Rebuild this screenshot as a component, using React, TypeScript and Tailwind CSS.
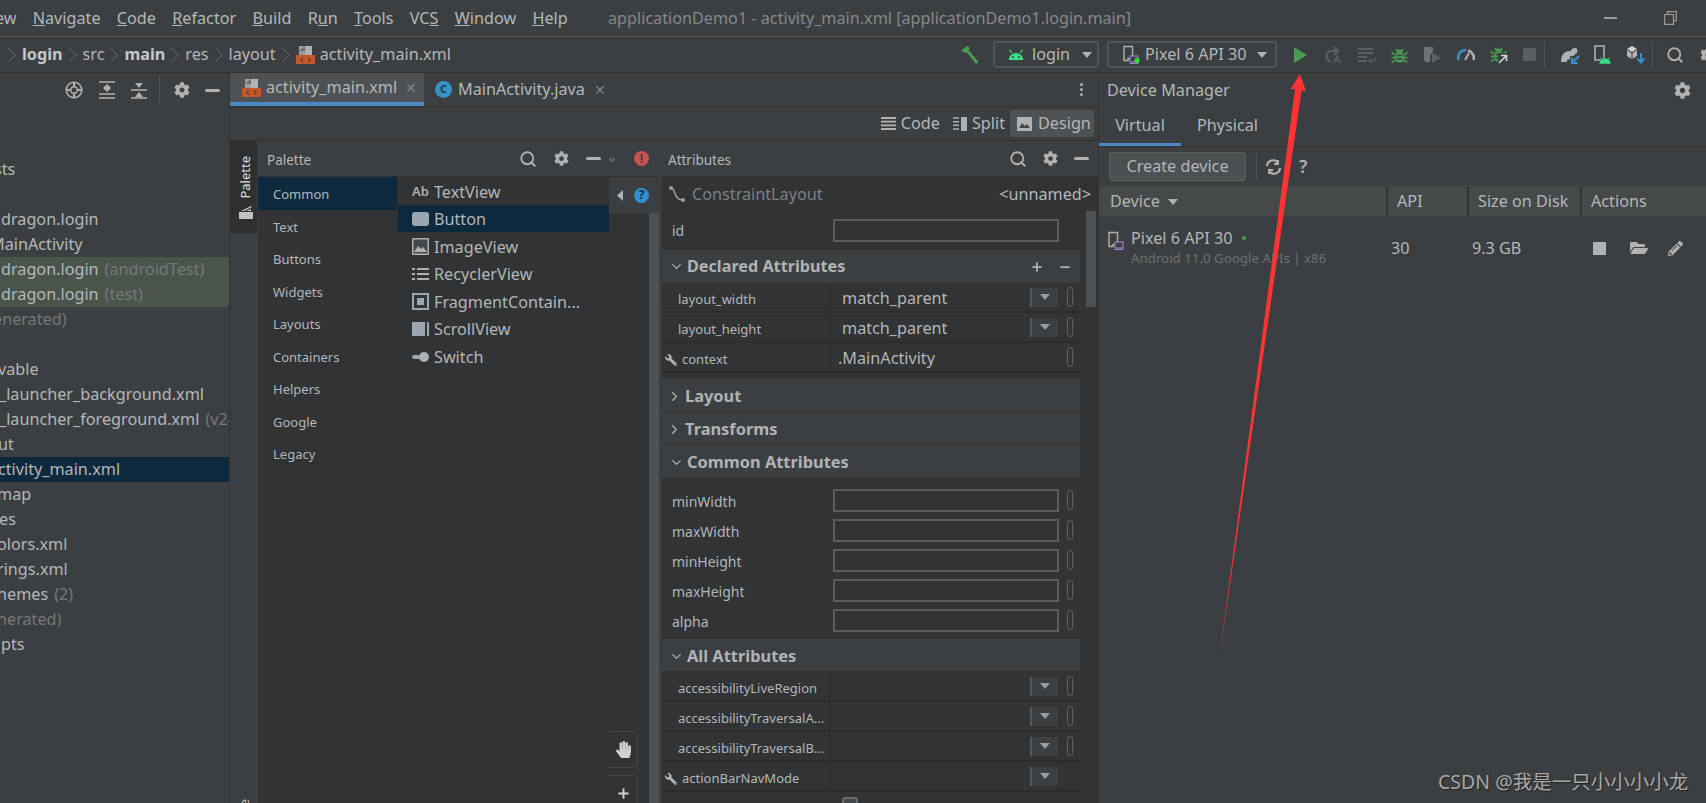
import { ChevronDown, ChevronRight, Minus, Plus, Search } from "lucide-react";
import { FaCog, FaFolderOpen, FaHandPaper, FaPencilAlt, FaWrench } from "react-icons/fa";
import type { ReactNode } from "react";

function XmlIcon() {
  return (
    <svg width="19" height="19" viewBox="0 0 19 19" className="shrink-0">
      <path d="M3 1h9l4 0v9H3z" fill="#9a9c9e" />
      <path d="M9 1h7v9H9z" fill="#afb1b3" />
      <path d="M3 6h6V1z" fill="#3c3f41" opacity="0.5" />
      <rect x="0" y="10" width="19" height="9" fill="#c2582a" />
      <path d="M7 12.5l-2.5 2 2.5 2M12 12.5l2.5 2-2.5 2" stroke="#2b2b2b" strokeWidth="1" fill="none" />
    </svg>
  );
}

function AndroidHead({ size = 16, color = "#3ddc84" }: { size?: number; color?: string }) {
  return (
    <svg width={size} height={size * 0.72} viewBox="0 0 16 11.5">
      <path d="M0.5 11.5a7.5 7.5 0 0 1 15 0z" fill={color} />
      <path d="M3.5 4L1.8 0.8M12.5 4l1.7-3.2" stroke={color} strokeWidth="1.3" />
      <circle cx="5" cy="8" r="0.9" fill="#3c3f41" />
      <circle cx="11" cy="8" r="0.9" fill="#3c3f41" />
    </svg>
  );
}

function PhoneIcon({ dot = false }: { dot?: boolean }) {
  return (
    <svg width="18" height="19" viewBox="0 0 18 19" className="shrink-0">
      <path d="M2 1.5h8.5v12H6v2H2z" fill="none" stroke="#afb1b3" strokeWidth="1.4" />
      <rect x="8" y="11" width="8" height="6" fill="#3c3f41" stroke="#9b7fc9" strokeWidth="1.2" />
      <path d="M7.5 18.5h9" stroke="#9b7fc9" strokeWidth="1" />
      {dot ? <circle cx="15" cy="15.5" r="2.6" fill="#22e02e" /> : null}
    </svg>
  );
}

function BugShape() {
  return (
    <g>
      <path d="M5 3l1.6 2M12 3l-1.6 2" stroke="#499c54" strokeWidth="1.6" />
      <path d="M5 6.5a3.5 3 0 0 1 7 0z" fill="#499c54" />
      <rect x="3.5" y="6.5" width="10" height="10" rx="4.5" fill="#499c54" />
      <path d="M0.5 6.5l3 2M16.5 6.5l-3 2M0.5 11.5h3M16.5 11.5h-3M0.8 16.5l3-2M16.2 16.5l-3-2" stroke="#499c54" strokeWidth="1.7" />
      <path d="M5.5 9.5h6M5.5 13h6" stroke="#3c3f41" strokeWidth="1.4" />
    </g>
  );
}

function Gear({ size = 15 }: { size?: number }) {
  return <FaCog size={size} color="#afb1b3" />;
}

function Dash() {
  return <div className="h-[3px] w-[15px] rounded-sm bg-[#afb1b3]" />;
}

function Slot({ children, w = "w-[33px]" }: { children: ReactNode; w?: string }) {
  return <div className={`flex ${w} shrink-0 items-center justify-center`}>{children}</div>;
}

function ImageGlyph() {
  return (
    <svg width="17" height="17" viewBox="0 0 17 17" className="shrink-0">
      <rect width="17" height="17" rx="1" fill="#afb1b3" />
      <rect x="1.5" y="1.5" width="14" height="14" fill="#45484a" />
      <path d="M2 14l4-6 3 3 2-2 4 5z" fill="#afb1b3" />
    </svg>
  );
}

function Menu() {
  const items: [string, string][] = [
    ["N", "avigate"],
    ["C", "ode"],
    ["R", "efactor"],
    ["B", "uild"],
  ];
  return (
    <div className="flex h-[36px] items-center overflow-hidden text-[16.2px] text-[#b4b7b9]">
      <div className="flex w-[608px] shrink-0 items-center gap-[16.3px]">
        <span className="ml-[-19px]">View</span>
        {items.map(([k, rest]) => (
          <span key={k}>
            <span className="underline">{k}</span>
            {rest}
          </span>
        ))}
        <span>
          R<span className="underline">u</span>n
        </span>
        <span>
          <span className="underline">T</span>ools
        </span>
        <span>
          VC<span className="underline">S</span>
        </span>
        <span>
          <span className="underline">W</span>indow
        </span>
        <span>
          <span className="underline">H</span>elp
        </span>
      </div>
      <span className="whitespace-nowrap text-[#85888a]">applicationDemo1 - activity_main.xml [applicationDemo1.login.main]</span>
      <div className="ml-auto flex items-center">
        <div className="mr-[47px] h-[1.5px] w-[13px] bg-[#9a9c9e]" />
        <svg width="13" height="14" viewBox="0 0 13 14" className="mr-[29px]">
          <path d="M3.5 3V0.7h8.8v9H9.5M0.7 3.5h8.8v9.8H0.7z" fill="none" stroke="#9a9c9e" strokeWidth="1.2" />
        </svg>
      </div>
    </div>
  );
}

function Crumb({ children, bold }: { children: ReactNode; bold?: boolean }) {
  return (
    <>
      <span className={bold ? "font-bold text-[#c4c7c9]" : ""}>{children}</span>
      <ChevronRight size={26} strokeWidth={0.7} className="mx-[-6px] text-[#7a7d7f]" />
    </>
  );
}

function Toolbar() {
  return (
    <div className="flex h-[37px] items-center border-t border-[#555452] border-b border-b-[#323232] text-[16.2px] text-[#b4b7b9]">
      <div className="flex items-center gap-[3px] pl-[5px]">
        <ChevronRight size={26} strokeWidth={0.7} className="mx-[-6px] text-[#7a7d7f]" />
        <Crumb bold>login</Crumb>
        <Crumb>src</Crumb>
        <Crumb bold>main</Crumb>
        <Crumb>res</Crumb>
        <Crumb>layout</Crumb>
        <XmlIcon />
        <span className="ml-[2px]">activity_main.xml</span>
      </div>
      <div className="ml-auto flex items-center">
        <svg width="20" height="20" viewBox="0 0 20 20" className="mr-[13px]">
          <path d="M1 6l6-5 3 2-4 5zM6.5 7l2-2 10 12-2.5 2z" fill="#499c54" />
        </svg>
        <div className="mr-[8px] flex h-[27px] w-[106px] items-center gap-[8px] rounded-[4px] border-2 border-[#50555a] pl-[13px]">
          <AndroidHead />
          <span>login</span>
          <svg width="10" height="6" viewBox="0 0 10 6" className="ml-[4px]"><path d="M0 0h10L5 6z" fill="#afb1b3" /></svg>
        </div>
        <div className="mr-[7px] flex h-[27px] w-[170px] items-center gap-[5px] rounded-[4px] border-2 border-[#50555a] pl-[13px]">
          <PhoneIcon dot />
          <span className="whitespace-nowrap">Pixel 6 API 30</span>
          <svg width="10" height="6" viewBox="0 0 10 6" className="ml-[5px]"><path d="M0 0h10L5 6z" fill="#afb1b3" /></svg>
        </div>
        <Slot>
          <svg width="13" height="16" viewBox="0 0 13 16"><path d="M0 0l13 8-13 8z" fill="#499c54" /></svg>
        </Slot>
        <Slot>
          <svg width="18" height="18" viewBox="0 0 18 18" fill="none" stroke="#5c5f61" strokeWidth="2.2">
            <path d="M11 5H8a5.5 5.5 0 0 0-2 11M9 1l4 4-4 4" />
            <path d="M9 17l3-7 3 7M10 14.5h4" strokeWidth="1.3" />
          </svg>
        </Slot>
        <Slot>
          <svg width="18" height="16" viewBox="0 0 18 16" fill="none" stroke="#5c5f61" strokeWidth="2">
            <path d="M0 2h15M0 6h15M0 10h9M0 14h9" />
            <path d="M17 10v2a2 2 0 0 1-2 2h-3M13.5 12l-2 2 2 2" strokeWidth="1.2" />
          </svg>
        </Slot>
        <Slot>
          <svg width="17" height="18" viewBox="0 0 17 18"><BugShape /></svg>
        </Slot>
        <Slot>
          <svg width="19" height="18" viewBox="0 0 19 18">
            <path d="M1 1h9v4l-3 5v6H4a3 3 0 0 1-3-3z" fill="#6e7072" />
            <path d="M9 7l9 5-9 5z" fill="#5c5f61" />
          </svg>
        </Slot>
        <Slot>
          <svg width="18" height="13" viewBox="0 0 18 13" fill="none">
            <path d="M1.5 12a7.5 7.5 0 0 1 7.5-10" stroke="#3592c4" strokeWidth="2.6" />
            <path d="M11 2.5a7.5 7.5 0 0 1 5.5 9.5" stroke="#afb1b3" strokeWidth="2.6" />
            <path d="M8 12l4-7" stroke="#afb1b3" strokeWidth="2" />
          </svg>
        </Slot>
        <Slot>
          <svg width="18" height="19" viewBox="0 0 18 19">
            <BugShape />
            <rect x="8" y="8" width="10" height="11" fill="#3c3f41" />
            <path d="M9 18l7-7M11 10.5h5.5V16" stroke="#cfd1d3" strokeWidth="1.7" fill="none" />
          </svg>
        </Slot>
        <Slot w="w-[29px]"><div className="h-[13px] w-[13px] bg-[#5c5f61]" /></Slot>
        <div className="mr-[8px] h-[26px] w-px bg-[#515557]" />
        <Slot>
          <svg width="20" height="18" viewBox="0 0 20 18">
            <path d="M1 16c0-7 3-11 9-11h1c0-3 5-4 6-2 1 2 0 5-2 5l-1 2v6h-3l-1-3-3 1v2H3z" fill="#afb1b3" />
            <rect x="10" y="10" width="10" height="8" fill="#3c3f41" />
            <path d="M19 10l-7 7M12 11.5V17h5.5" stroke="#3592c4" strokeWidth="2.2" fill="none" />
          </svg>
        </Slot>
        <Slot>
          <svg width="19" height="20" viewBox="0 0 19 20">
            <path d="M2 1h9v14H2z" fill="none" stroke="#afb1b3" strokeWidth="1.6" />
            <path d="M6 19a6 6 0 0 1 12 0z" fill="#3ddc84" stroke="#3c3f41" strokeWidth="0.5" />
            <path d="M8.5 14.5l-1-2M15.5 14.5l1-2" stroke="#3ddc84" strokeWidth="1" />
          </svg>
        </Slot>
        <Slot>
          <svg width="19" height="19" viewBox="0 0 19 19">
            <path d="M1 4l5-3 5 3-5 3z" fill="#cfd1d3" />
            <path d="M1 5l4.5 3v6L1 11zM11 5L6.5 8v6l4.5-3z" fill="#afb1b3" />
            <path d="M15 8v9M11.5 13.5l3.5 4 3.5-4" stroke="#3592c4" strokeWidth="2" fill="none" />
          </svg>
        </Slot>
        <div className="h-[26px] w-px bg-[#515557]" />
        <Slot w="w-[44px]"><Search size={18} strokeWidth={2.4} color="#afb1b3" /></Slot>
        <Slot w="w-[9px]"><div className="ml-[12px]"><FaCog size={16} color="#afb1b3" /></div></Slot>
      </div>
    </div>
  );
}

const treeRows: { text: string; note?: string; cls: string; bg?: string; dim?: boolean }[] = [
  { text: "sts", cls: "ml-[-6px]" },
  { text: "", cls: "" },
  { text: "dragon.login", cls: "ml-[1px]" },
  { text: "MainActivity", cls: "ml-[-10px]" },
  { text: "dragon.login", note: "(androidTest)", cls: "ml-[1px]", bg: "bg-[#4a544b]" },
  { text: "dragon.login", note: "(test)", cls: "ml-[1px]", bg: "bg-[#4a544b]" },
  { text: "enerated)", cls: "ml-[-7px]", dim: true },
  { text: "", cls: "" },
  { text: "vable", cls: "ml-[-2px]" },
  { text: "_launcher_background.xml", cls: "ml-[-1px]" },
  { text: "_launcher_foreground.xml", note: "(v24)", cls: "ml-[-1px]" },
  { text: "ut", cls: "ml-[-2px]" },
  { text: "ctivity_main.xml", cls: "ml-[-2px]", bg: "bg-[#0d293e]" },
  { text: "map", cls: "ml-[-3px]" },
  { text: "es", cls: "ml-[-1px]" },
  { text: "olors.xml", cls: "ml-[-3px]" },
  { text: "rings.xml", cls: "ml-[-3px]" },
  { text: "hemes", note: "(2)", cls: "ml-[-3px]" },
  { text: "nerated)", cls: "ml-[-3px]", dim: true },
  { text: "pts", cls: "ml-[1px]" },
];

function ProjectPanel() {
  return (
    <div className="flex w-[230px] shrink-0 flex-col overflow-hidden border-r border-[#323232]">
      <div className="relative flex h-[34px] items-center justify-end text-[#afb1b3]">
        <svg width="18" height="18" viewBox="0 0 18 18" fill="none" stroke="#afb1b3" className="absolute left-[65px]">
          <circle cx="9" cy="9" r="7.8" strokeWidth="1.6" />
          <circle cx="9" cy="9" r="3.2" strokeWidth="1.4" />
          <path d="M9 1v4M9 13v4M1 9h4M13 9h4" strokeWidth="2" />
        </svg>
        <svg width="16" height="18" viewBox="0 0 16 18" className="absolute left-[99px]">
          <path d="M0 1h16M0 17h16M0 13h16" stroke="#afb1b3" strokeWidth="1.6" />
          <path d="M8 3l4 4H4zM8 11L4 7h8z" fill="#afb1b3" />
        </svg>
        <svg width="16" height="18" viewBox="0 0 16 18" className="absolute left-[131px]">
          <path d="M0 9h16M0 17h16" stroke="#afb1b3" strokeWidth="1.6" />
          <path d="M8 7L4 2h8zM8 11l4 5H4z" fill="#afb1b3" />
        </svg>
        <div className="absolute left-[159px] h-[26px] w-px bg-[#515557]" />
        <div className="absolute left-[174px]"><Gear size={16} /></div>
        <div className="absolute left-[205px]"><Dash /></div>
      </div>
      <div className="flex-1 pt-[50px] text-[16.2px] text-[#b4b7b9]">
        {treeRows.map((r, i) => (
          <div key={i} className={`flex h-[25px] items-center whitespace-nowrap ${r.bg ?? ""}`}>
            <span className={`${r.cls} ${r.dim ? "text-[#75787a]" : ""}`}>{r.text}</span>
            {r.note ? <span className="ml-[6px] text-[#75787a]">{r.note}</span> : null}
          </div>
        ))}
      </div>
    </div>
  );
}

function Tabs() {
  return (
    <div className="flex h-[34px] items-stretch border-b border-[#323232] text-[16.2px] text-[#b4b7b9]">
      <div className="flex w-[194px] shrink-0 items-center gap-[5px] border-b-4 border-[#4a88c7] bg-[#4e5254] pl-[12px]">
        <XmlIcon />
        <span>activity_main.xml</span>
        <span className="ml-[3px] text-[14px] text-[#7f8284]">✕</span>
      </div>
      <div className="ml-[11px] flex items-center gap-[6px]">
        <div className="flex h-[17px] w-[17px] items-center justify-center rounded-full bg-[#3592c4] text-[11px] font-bold text-[#1f3a4a]">C</div>
        <span>MainActivity.java</span>
        <span className="ml-[3px] text-[14px] text-[#7f8284]">✕</span>
      </div>
      <div className="ml-auto mr-[15px] flex flex-col justify-center gap-[2px]">
        <div className="h-[3px] w-[3px] rounded-full bg-[#afb1b3]" />
        <div className="h-[3px] w-[3px] rounded-full bg-[#afb1b3]" />
        <div className="h-[3px] w-[3px] rounded-full bg-[#afb1b3]" />
      </div>
    </div>
  );
}

function ViewModes() {
  return (
    <div className="flex h-[34px] items-center justify-end border-b border-[#323232] pr-[4px] text-[16.2px] text-[#b4b7b9]">
      <svg width="15" height="14" viewBox="0 0 15 14" className="mr-[5px]">
        <path d="M0 1h15M0 4.7h15M0 8.3h15M0 12h15" stroke="#afb1b3" strokeWidth="1.8" />
      </svg>
      <span className="mr-[13px]">Code</span>
      <svg width="14" height="14" viewBox="0 0 14 14" className="mr-[5px]">
        <path d="M0 1h6M0 4.7h6M0 8.3h6M0 12h6" stroke="#afb1b3" strokeWidth="1.6" />
        <rect x="8" y="0" width="6" height="14" fill="#afb1b3" />
      </svg>
      <span className="mr-[5px]">Split</span>
      <div className="flex h-[27px] w-[84px] items-center gap-[6px] rounded-[3px] bg-[#4e5254] pl-[7px]">
        <svg width="15" height="14" viewBox="0 0 15 14" className="shrink-0">
          <rect width="15" height="14" fill="#afb1b3" />
          <path d="M2 11l3-5 3 3 2-2 3 4z" fill="#45484a" />
        </svg>
        <span>Design</span>
      </div>
    </div>
  );
}

function PaletteStrip() {
  return (
    <div className="flex w-[28px] shrink-0 flex-col border-r border-[#3c3f41] bg-[#3c3f41]">
      <div className="flex h-[92px] flex-col items-center justify-end gap-[6px] bg-[#2d2f30] pb-[14px] pl-[4px]">
        <span className="rotate-180 text-[13px] text-[#e0e0e0] [writing-mode:vertical-rl]">Palette</span>
        <svg width="14" height="14" viewBox="0 0 14 14">
          <path d="M0 7h14v7H0zM2 6l10-5 1 1-8 4zM7 6l5-2v2z" fill="#c0c2c4" />
        </svg>
      </div>
      <div className="mt-auto mb-[-3px] flex justify-center pl-[3px]">
        <span className="rotate-180 text-[12.5px] leading-none text-[#c0c2c4] [writing-mode:vertical-rl]">e</span>
      </div>
    </div>
  );
}

const categories = ["Common", "Text", "Buttons", "Widgets", "Layouts", "Containers", "Helpers", "Google", "Legacy"];

function paletteIcon(name: string) {
  switch (name) {
    case "TextView":
      return <span className="w-[17px] text-[13px] font-semibold text-[#afb1b3]">Ab</span>;
    case "Button":
      return <div className="h-[14px] w-[17px] rounded-[3px] bg-[#9aa7b0]" />;
    case "ImageView":
      return <ImageGlyph />;
    case "RecyclerView":
      return (
        <svg width="17" height="14" viewBox="0 0 17 14">
          <path d="M0 2h3M5 2h12M0 7h3M5 7h12M0 12h3M5 12h12" stroke="#afb1b3" strokeWidth="2" />
        </svg>
      );
    case "FragmentContain...":
      return (
        <svg width="17" height="17" viewBox="0 0 17 17">
          <rect x="1" y="1" width="15" height="15" fill="none" stroke="#9aa7b0" strokeWidth="2" />
          <rect x="5" y="5" width="7" height="7" fill="#9aa7b0" />
        </svg>
      );
    case "ScrollView":
      return (
        <svg width="17" height="14" viewBox="0 0 17 14">
          <rect width="13" height="14" fill="#9aa7b0" />
          <rect x="15" width="2" height="14" fill="#9aa7b0" />
        </svg>
      );
    default:
      return (
        <svg width="17" height="10" viewBox="0 0 17 10">
          <rect x="0" y="3" width="8" height="4" rx="2" fill="#9aa7b0" />
          <circle cx="12" cy="5" r="5" fill="#afb1b3" />
        </svg>
      );
  }
}

function Palette() {
  const items = ["TextView", "Button", "ImageView", "RecyclerView", "FragmentContain...", "ScrollView", "Switch"];
  return (
    <div className="flex w-[351px] shrink-0 flex-col">
      <div className="flex h-[36px] shrink-0 items-center border-b border-[#323232] pl-[9px] pr-[8px] text-[13.5px] text-[#b4b7b9]">
        <span className="pt-[3px]">Palette</span>
        <div className="ml-auto flex items-center gap-[17px]">
          <Search size={18} strokeWidth={2.4} color="#afb1b3" />
          <Gear />
          <Dash />
        </div>
      </div>
      <div className="flex flex-1 bg-[#313335]">
        <div className="flex w-[139px] shrink-0 flex-col">
          {categories.map((c, i) => (
            <div key={c} className={`flex h-[32.5px] items-center pl-[15px] pt-[3px] text-[13px] text-[#b4b7b9] ${i === 0 ? "bg-[#0d293e]" : ""}`}>
              {c}
            </div>
          ))}
        </div>
        <div className="ml-px flex-1 text-[16.2px] text-[#b4b7b9]">
          {items.map((it, i) => (
            <div key={it} className={`flex h-[27.5px] items-center gap-[4px] overflow-hidden whitespace-nowrap pl-[14px] pt-[2px] ${i === 1 ? "bg-[#0d293e]" : ""}`}>
              <div className="flex w-[18px] shrink-0 items-center">{paletteIcon(it)}</div>
              {it}
            </div>
          ))}
        </div>
      </div>
    </div>
  );
}

function IssueStrip() {
  return (
    <div className="flex w-[50px] shrink-0 flex-col overflow-hidden bg-[#313335]">
      <div className="flex h-[36px] shrink-0 items-center border-b border-[#323232] bg-[#3c3f41] pr-[10px] text-[#9a9c9e]">
        <span className="text-[9px]">‹›</span>
        <div className="ml-auto flex h-[15px] w-[15px] items-center justify-center rounded-full bg-[#c75450] text-[12px] font-bold text-[#3c3f41]">!</div>
      </div>
      <div className="flex h-[36px] shrink-0 items-center bg-[#3c3f41] pl-[8px] pr-[10px]">
        <svg width="6" height="11" viewBox="0 0 6 11"><path d="M6 0v11L0 5.5z" fill="#afb1b3" /></svg>
        <div className="ml-auto flex h-[15px] w-[15px] items-center justify-center rounded-full bg-[#2f8fd0] text-[12px] font-bold text-[#20303c]">?</div>
      </div>
      <div className="flex flex-1">
        <div className="flex w-[40px] shrink-0 flex-col gap-[7px] pt-[518px] text-[#cfd1d3]">
          <div className="flex h-[37px] w-[29px] shrink-0 items-center justify-center rounded-r-[5px] border border-l-0 border-[#45484a]">
            <FaHandPaper size={17} />
          </div>
          <div className="flex h-[37px] w-[29px] shrink-0 items-center justify-center rounded-r-[5px] border border-l-0 border-[#45484a]">
            <Plus size={15} strokeWidth={3} />
          </div>
        </div>
        <div className="w-[10px] bg-[#4e5254]" />
      </div>
    </div>
  );
}

function Pill() {
  return <div className="h-[20px] w-[6px] shrink-0 rounded-[3px] border border-[#5e6163]" />;
}

function Dropdown() {
  return (
    <div className="flex h-[19px] w-[28px] shrink-0 items-center justify-center border-l-2 border-[#55585a] bg-[#3c3f41]">
      <svg width="10" height="6" viewBox="0 0 10 6"><path d="M0 0h10L5 6z" fill="#9a9c9e" /></svg>
    </div>
  );
}

function AttrRow({ label, value, wrench, dropdown = true, pill = true, small }: { label: string; value?: string; wrench?: boolean; dropdown?: boolean; pill?: boolean; small?: boolean }) {
  return (
    <div className="flex h-[30px] items-center border-b-2 border-[#2a2c2e]">
      <div className={`flex h-full w-[167px] shrink-0 items-center whitespace-nowrap pt-[5px] text-[13px] text-[#b4b7b9] ${wrench ? "pl-[3px]" : "pl-[16px]"}`}>
        {wrench ? <FaWrench size={12} color="#afb1b3" className="mr-[5px] scale-x-[-1]" /> : null}
        {label}
      </div>
      <div className="h-full w-px bg-[#2a2c2e]" />
      <div className={`flex-1 pt-[3px] text-[16.2px] text-[#b4b7b9] ${small ? "pl-[8px]" : "pl-[12px]"}`}>{value}</div>
      {dropdown ? <Dropdown /> : null}
      <div className="ml-[9px] w-[6px]">{pill ? <Pill /> : null}</div>
      <div className="w-[7px]" />
    </div>
  );
}

function Section({ title, open }: { title: string; open?: boolean }) {
  return (
    <div className={`flex h-[33px] items-center gap-[3px] border-b border-[#323232] bg-[#3c3f41] pt-[2px] text-[16.4px] font-bold text-[#b0b3b5] ${open ? "pl-[7px]" : "pl-[5px]"}`}>
      {open ? <ChevronDown size={15} strokeWidth={2} /> : <ChevronRight size={15} strokeWidth={2} />}
      {title}
    </div>
  );
}

function FieldRow({ label }: { label: string }) {
  return (
    <div className="flex h-[30px] items-center text-[14px] text-[#b4b7b9]">
      <span className="w-[171px] shrink-0 pl-[10px] pt-[2px]">{label}</span>
      <div className="h-[23px] w-[226px] shrink-0 border-2 border-[#5a5c5e] bg-[#313335]" />
      <div className="ml-[8px]"><Pill /></div>
    </div>
  );
}

function Attributes() {
  return (
    <div className="ml-[3px] flex w-[437px] shrink-0 flex-col overflow-hidden border-r border-[#323232]">
      <div className="flex h-[36px] shrink-0 items-center border-b border-[#323232] pl-[6px] pr-[9px] text-[13.5px] text-[#b4b7b9]">
        <span className="pt-[3px]">Attributes</span>
        <div className="ml-auto flex items-center gap-[16px]">
          <Search size={18} strokeWidth={2.4} color="#afb1b3" />
          <Gear />
          <Dash />
        </div>
      </div>
      <div className="flex flex-1 flex-col bg-[#313335]">
        <div className="flex h-[34px] shrink-0 items-center pl-[6px] pr-[7px] text-[16.2px]">
          <svg width="18" height="18" viewBox="0 0 18 18" fill="none" className="mr-[6px]">
            <path d="M3 3c5 0 2 12 12 12" stroke="#9a9c9e" strokeWidth="1.6" />
            <circle cx="3" cy="3" r="2" fill="#9a9c9e" />
            <circle cx="15" cy="15" r="2" fill="#9a9c9e" />
          </svg>
          <span className="text-[#7e8183]">ConstraintLayout</span>
          <span className="ml-auto text-[#b4b7b9]">&lt;unnamed&gt;</span>
        </div>
        <div className="flex flex-1">
          <div className="w-[418px] shrink-0">
            <div className="flex h-[39px] items-center text-[14px] text-[#b4b7b9]">
              <span className="w-[171px] shrink-0 pl-[10px]">id</span>
              <div className="h-[23px] w-[226px] border-2 border-[#5a5c5e] bg-[#313335]" />
            </div>
            <div className="flex h-[33px] items-center gap-[3px] bg-[#3c3f41] pl-[7px] pr-[8px] text-[16.2px] font-bold text-[#b0b3b5]">
              <ChevronDown size={15} strokeWidth={2} />
              Declared Attributes
              <div className="ml-auto flex items-center gap-[14px]">
                <Plus size={14} strokeWidth={3} color="#afb1b3" />
                <Minus size={14} strokeWidth={3} color="#afb1b3" />
              </div>
            </div>
            <AttrRow label="layout_width" value="match_parent" />
            <AttrRow label="layout_height" value="match_parent" />
            <AttrRow label="context" value=".MainActivity" wrench dropdown={false} small />
            <div className="h-[6px]" />
            <Section title="Layout" />
            <Section title="Transforms" />
            <Section title="Common Attributes" open />
            <div className="h-[7px]" />
            <FieldRow label="minWidth" />
            <FieldRow label="maxWidth" />
            <FieldRow label="minHeight" />
            <FieldRow label="maxHeight" />
            <FieldRow label="alpha" />
            <div className="h-[4px]" />
            <Section title="All Attributes" open />
            <AttrRow label="accessibilityLiveRegion" />
            <AttrRow label="accessibilityTraversalA..." />
            <AttrRow label="accessibilityTraversalB..." />
            <AttrRow label="actionBarNavMode" wrench pill={false} />
            <div className="ml-[180px] mt-[5px] h-[16px] w-[16px] rounded-[3px] border-2 border-[#6a6d6f] bg-[#45484a]" />
          </div>
          <div className="ml-[6px] h-[96px] w-[10px] bg-[#4e5254]" />
        </div>
      </div>
    </div>
  );
}

function DeviceManager() {
  return (
    <div className="flex flex-1 flex-col text-[16.2px] text-[#b4b7b9]">
      <div className="flex h-[34px] shrink-0 items-center pl-[8px] pr-[15px]">
        <span>Device Manager</span>
        <div className="ml-auto"><Gear size={17} /></div>
      </div>
      <div className="flex h-[40px] shrink-0 items-stretch border-b border-[#323232]">
        <div className="flex w-[82px] items-center justify-center border-b-3 border-[#4a88c7]">Virtual</div>
        <div className="ml-[16px] flex items-center pb-[3px]">Physical</div>
      </div>
      <div className="flex h-[39px] shrink-0 items-center pl-[10px]">
        <div className="flex h-[29px] w-[137px] items-center justify-center rounded-[3px] border border-[#5e6060] bg-[#4c5052]">Create device</div>
        <div className="ml-[10px] h-[26px] w-px bg-[#515557]" />
        <svg width="17" height="16" viewBox="0 0 17 16" fill="none" stroke="#afb1b3" strokeWidth="2.2" className="ml-[8px]">
          <path d="M2 7a6 6 0 0 1 11-3M15 9a6 6 0 0 1-11 3" />
          <path d="M13 1v4H9M4 15v-4h4" strokeWidth="1.8" />
        </svg>
        <span className="ml-[17px] text-[18px] font-semibold text-[#afb1b3]">?</span>
      </div>
      <div className="flex h-[30px] shrink-0 items-center bg-[#45494a] pt-px">
        <div className="flex h-full w-[289px] items-center gap-[8px] border-r-2 border-[#323232] pl-[11px]">
          Device
          <svg width="10" height="6" viewBox="0 0 10 6"><path d="M0 0h10L5 6z" fill="#afb1b3" /></svg>
        </div>
        <div className="flex h-full w-[81px] items-center border-r-2 border-[#323232] pl-[9px]">API</div>
        <div className="flex h-full w-[113px] items-center border-r-2 border-[#323232] pl-[9px]">Size on Disk</div>
        <div className="pl-[9px]">Actions</div>
      </div>
      <div className="flex h-[64px] shrink-0 items-center">
        <div className="flex w-[289px] items-center pl-[8px]">
          <div className="mt-[-16px]"><PhoneIcon /></div>
          <div className="ml-[6px]">
            <div className="flex items-center gap-[9px] leading-[20px]">
              Pixel 6 API 30
              <div className="h-[4px] w-[4px] rounded-full bg-[#499c54]" />
            </div>
            <div className="whitespace-nowrap text-[13.3px] leading-[21px] text-[#6e7173]">Android 11.0 Google APIs | x86</div>
          </div>
        </div>
        <div className="w-[81px] pl-[3px]">30</div>
        <div className="w-[113px] pl-[3px]">9.3 GB</div>
        <div className="flex items-center pl-[11px]">
          <div className="h-[13px] w-[13px] bg-[#afb1b3]" />
          <div className="ml-[24px]"><FaFolderOpen size={18} color="#afb1b3" /></div>
          <div className="ml-[20px]"><FaPencilAlt size={15} color="#afb1b3" /></div>
        </div>
      </div>
    </div>
  );
}

export default function App() {
  return (
    <div className="relative h-[803px] w-[1706px] overflow-hidden bg-[#3c3f41] font-['Noto_Sans','Noto_Sans_CJK_SC',sans-serif]">
      <Menu />
      <Toolbar />
      <div className="flex h-[730px]">
        <ProjectPanel />
        <div className="flex w-[869px] shrink-0 flex-col border-r border-[#323232]">
          <Tabs />
          <ViewModes />
          <div className="flex flex-1 overflow-hidden">
            <PaletteStrip />
            <Palette />
            <IssueStrip />
            <Attributes />
          </div>
        </div>
        <DeviceManager />
      </div>
      {/* red annotation arrow drawn on top of the screenshot */}
      <svg width="1706" height="803" className="pointer-events-none absolute left-0 top-0">
        <polygon points="1300,74 1306,91 1301.5,91 1219.6,656 1295,89 1290.5,89" fill="#ff3333" />
      </svg>
      <div className="absolute left-[1438px] top-[770px] whitespace-nowrap text-[19.5px] leading-[24px] text-[#a8a8a8] [text-shadow:1px_1px_1px_#222]">
        CSDN @我是一只小小小小龙
      </div>
    </div>
  );
}
